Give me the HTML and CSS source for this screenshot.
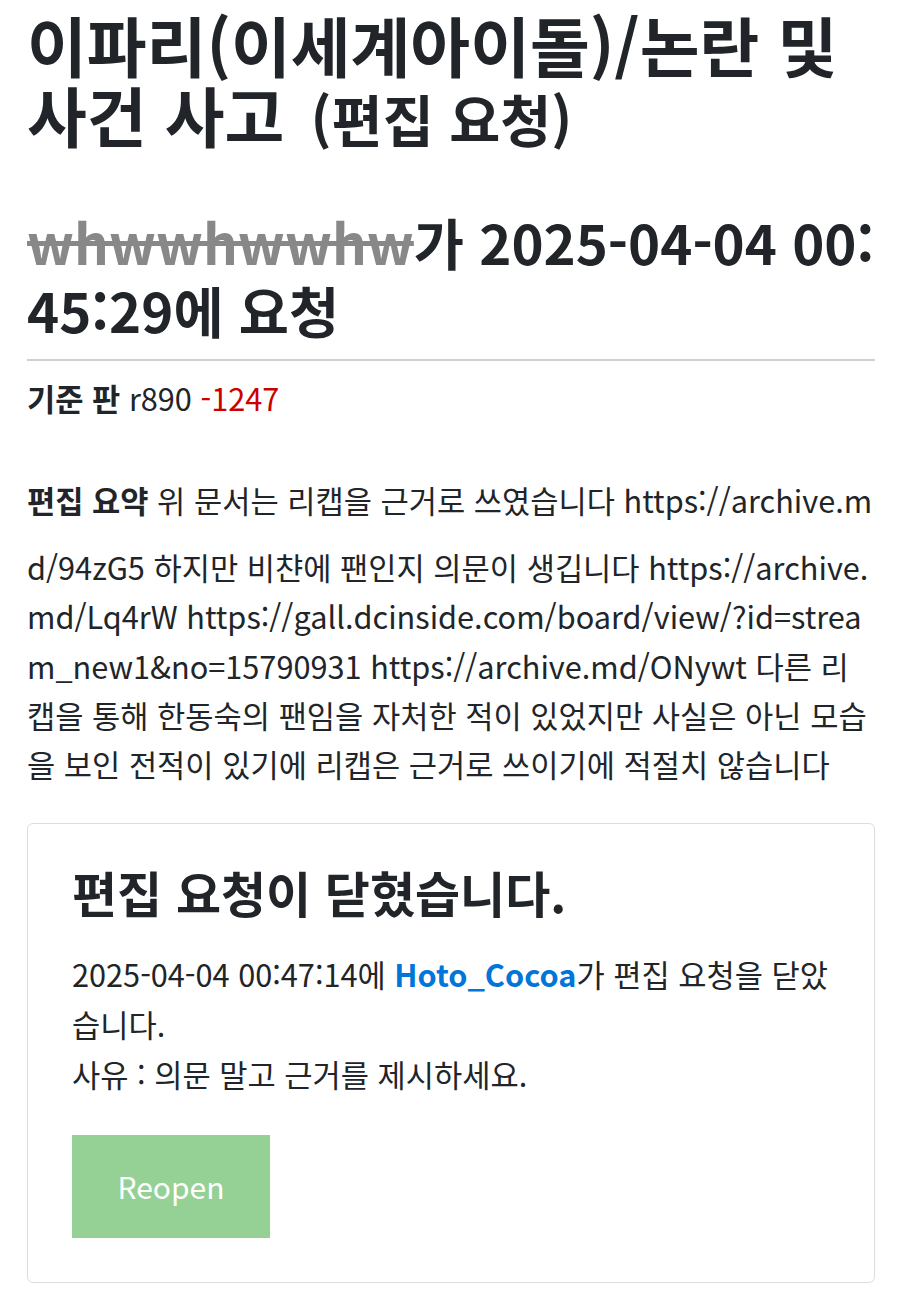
FILE: index.html
```html
<!DOCTYPE html>
<html lang="ko">
<head>
<meta charset="utf-8">
<title>편집 요청</title>
<link rel="stylesheet" href="styles.css">
</head>
<body>
<main class="page">
  <h1 class="title">이파리(이세계아이돌)/논란 및 사건 사고 <small class="sub">(편집 요청)</small></h1>
  <h2 class="req"><del class="user">whwwhwwhw</del>가 2025-04-04 00:45:29에 요청</h2>
  <hr class="rule">
  <p class="base"><b>기준 판</b> r890 <span class="diff">-1247</span></p>
  <p class="summary"><b class="label">편집 요약</b> 위 문서는 리캡을 근거로 쓰였습니다 https://archive.md/94zG5 하지만 비챤에 팬인지 의문이 생깁니다 https://archive.md/Lq4rW https://gall.dcinside.com/board/view/?id=stream_new1&amp;no=15790931 https://archive.md/ONywt 다른 리캡을 통해 한동숙의 팬임을 자처한 적이 있었지만 사실은 아닌 모습을 보인 전적이 있기에 리캡은 근거로 쓰이기에 적절치 않습니다</p>
  <section class="card">
    <h3 class="card-title">편집 요청이 닫혔습니다.</h3>
    <p class="card-text">2025-04-04 00:47:14에 <a class="who" href="#">Hoto_Cocoa</a>가 편집 요청을 닫았습니다.<br>사유 : 의문 말고 근거를 제시하세요.</p>
    <button class="btn" type="button" disabled>Reopen</button>
  </section>
</main>
</body>
</html>
```
FILE: styles.css
```css
html, body {
  margin: 0;
  padding: 0;
  background: #fff;
}
body {
  font-family: "Noto Sans CJK KR", "Noto Sans", sans-serif;
  color: #212529;
}
.page {
  padding: 9px 25px 20px 27px;
  word-break: break-all;
}
.title {
  font-size: 65px;
  line-height: 70px;
  font-weight: 700;
  margin: 0;
}
.sub {
  font-size: 55.5px;
  font-weight: 700;
  margin-left: 8px;
}
.req {
  font-size: 54.5px;
  line-height: 68px;
  font-weight: 700;
  margin: 55px 0 0;
}
.user {
  color: #888;
  text-decoration: line-through;
}
.rule {
  border: 0;
  border-top: 2px solid #d0d0d0;
  margin: 15px 0 0;
}
.base {
  font-size: 30.7px;
  line-height: 49.4px;
  margin: 12px 0 0;
}
.diff {
  color: #cc0000;
}
.summary {
  font-size: 30.7px;
  line-height: 49.4px;
  margin: 53px 0 0;
}
.label {
  display: inline-block;
  padding-bottom: 17px;
}
.card {
  margin-top: 34px;
  border: 1px solid #dddddd;
  border-radius: 6px;
  padding: 39px 44px 44px;
}
.card-title {
  font-size: 49px;
  line-height: 58px;
  font-weight: 700;
  margin: 0;
}
.card-text {
  font-size: 30.7px;
  line-height: 50px;
  margin: 28px 0 0;
}
.who {
  color: #0275d8;
  font-weight: 700;
  text-decoration: none;
}
.btn {
  display: block;
  margin-top: 36px;
  font-family: inherit;
  font-size: 30px;
  color: #fff;
  background: #95d195;
  border: 0;
  border-radius: 0;
  width: 198px;
  height: 103px;
  padding: 0;
}
```
